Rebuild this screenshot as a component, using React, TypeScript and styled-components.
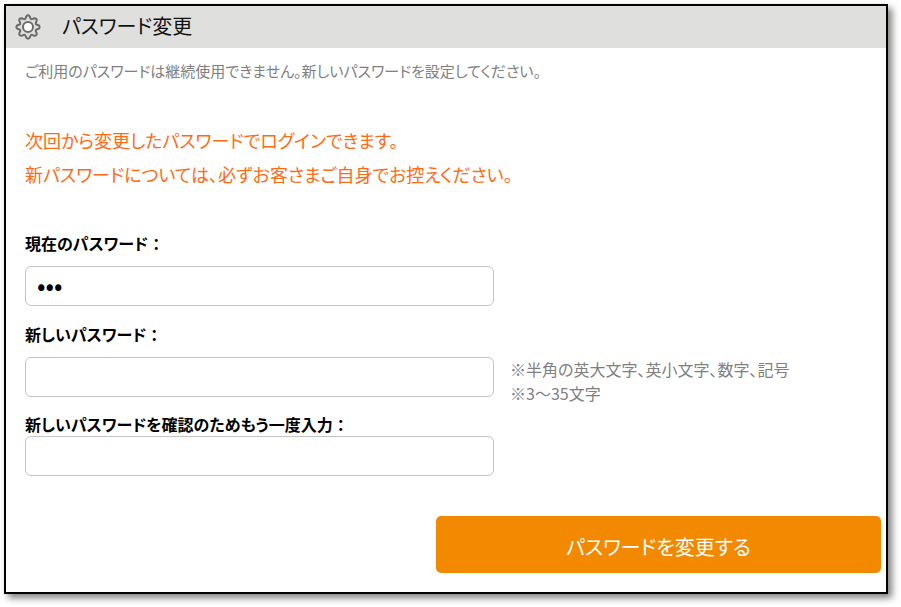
import React from "react";
import styled, { createGlobalStyle } from "styled-components";

const GlobalStyle = createGlobalStyle`
  *, *::before, *::after { box-sizing: border-box; }
  body {
    margin: 0;
    background: #fff;
    color: #111;
    font-family: "Noto Sans CJK JP", sans-serif;
    font-feature-settings: "palt";
  }
`;

const Panel = styled.main`
  margin: 4px 13px 12px 4px;
  border: 2px solid #000;
  background: #fff;
  box-shadow: 4px 4px 7px rgba(0, 0, 0, 0.5);
`;

const Header = styled.header`
  display: flex;
  align-items: center;
  gap: 21px;
  height: 42px;
  padding: 0 9px;
  background: #dfdfde;
`;

const Title = styled.h1`
  margin: 0;
  padding-bottom: 2px;
  font-size: 20px;
  font-weight: 400;
  line-height: 32px;
`;

const Body = styled.div`
  padding: 11px 5px 19px 19px;
`;

const Lead = styled.p`
  margin: 0;
  color: #808080;
  font-size: 15px;
  font-weight: 400;
  line-height: 24px;
`;

const Notice = styled.p`
  margin: 40px 0;
  color: #ff6a13;
  font-size: 18px;
  font-weight: 400;
  line-height: 34px;
`;

const Form = styled.form`
  display: flex;
  flex-direction: column;
`;

const Field = styled.div<{ $gap?: number }>`
  display: flex;
  flex-direction: column;
  margin-bottom: ${(p) => p.$gap ?? 16}px;
`;

const Label = styled.label<{ $tight?: boolean }>`
  margin-bottom: ${(p) => (p.$tight ? 0 : 11)}px;
  color: #000;
  font-size: 16px;
  font-weight: 700;
  line-height: 24px;
`;

const Colon = styled.span`
  font-feature-settings: normal;
`;

const Row = styled.div`
  display: flex;
  gap: 16px;
`;

const PasswordInput = styled.input`
  flex: 0 1 469px;
  min-width: 0;
  height: 40px;
  padding: 0 11px 4px;
  border: 1px solid #c4c4c4;
  border-radius: 6px;
  background: #fff;
  color: #000;
  font-family: "Noto Sans CJK JP", sans-serif;
  font-size: 25px;
`;

const Hint = styled.p`
  margin: 0;
  color: #808080;
  font-size: 16px;
  font-weight: 400;
  line-height: 24px;
`;

const SubmitButton = styled.button`
  align-self: flex-end;
  width: 52%;
  height: 57px;
  padding: 4px 0 0;
  border: 0;
  border-radius: 5px;
  background: #f28900;
  color: #fff;
  font: inherit;
  font-feature-settings: inherit;
  font-size: 20px;
`;

const GearSvg = styled.svg`
  flex: none;
  width: 26px;
  height: 26px;
  fill: none;
  stroke: #6b6b6b;
  stroke-width: 2;
  stroke-linejoin: round;
`;

function gearPath(): string {
  const at = (r: number, deg: number) => {
    const a = (deg * Math.PI) / 180;
    return `${(13 + r * Math.sin(a)).toFixed(2)} ${(13 - r * Math.cos(a)).toFixed(2)}`;
  };
  let d = "";
  for (let i = 0; i < 8; i++) {
    const c = i * 45;
    d += `${i ? "L" : "M"}${at(10.8, c - 9)}Q${at(12.6, c)} ${at(10.8, c + 9)}`;
    d += `L${at(9.4, c + 14)}Q${at(7.6, c + 22.5)} ${at(9.4, c + 31)}`;
  }
  return d + "Z";
}

const GearIcon = () => (
  <GearSvg viewBox="0 0 26 26" aria-hidden="true">
    <path d={gearPath()} />
    <circle cx="13" cy="13" r="5" fill="#fff" />
  </GearSvg>
);

export default function App() {
  return (
    <>
      <GlobalStyle />
      <Panel lang="ja">
        <Header>
          <GearIcon />
          <Title>パスワード変更</Title>
        </Header>
        <Body>
          <Lead>ご利用のパスワードは継続使用できません。新しいパスワードを設定してください。</Lead>
          <Notice>
            次回から変更したパスワードでログインできます。
            <br />
            新パスワードについては、必ずお客さまご自身でお控えください。
          </Notice>
          <Form onSubmit={(e) => e.preventDefault()}>
            <Field>
              <Label htmlFor="current">
                現在のパスワード<Colon>：</Colon>
              </Label>
              <Row>
                <PasswordInput id="current" type="password" defaultValue="abc" />
              </Row>
            </Field>
            <Field $gap={7}>
              <Label htmlFor="next">
                新しいパスワード<Colon>：</Colon>
              </Label>
              <Row>
                <PasswordInput id="next" type="password" aria-describedby="rules" />
                <Hint id="rules">
                  ※半角の英大文字、英小文字、数字、記号
                  <br />
                  ※3～35文字
                </Hint>
              </Row>
            </Field>
            <Field $gap={40}>
              <Label htmlFor="confirm" $tight>
                新しいパスワードを確認のためもう一度入力<Colon>：</Colon>
              </Label>
              <Row>
                <PasswordInput id="confirm" type="password" />
              </Row>
            </Field>
            <SubmitButton type="submit">パスワードを変更する</SubmitButton>
          </Form>
        </Body>
      </Panel>
    </>
  );
}
